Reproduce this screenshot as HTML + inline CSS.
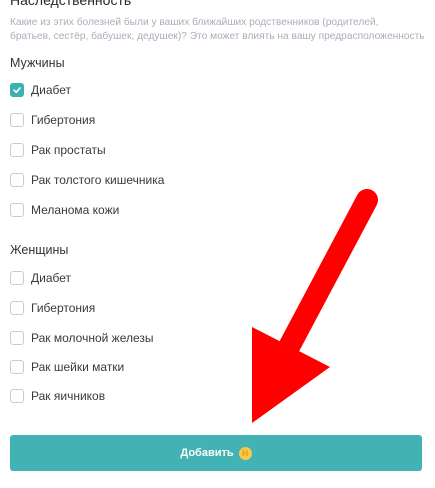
<!DOCTYPE html>
<html><head><meta charset="utf-8"><style>
body{margin:0;width:435px;height:488px;background:#fff;font-family:"Liberation Sans",sans-serif;position:relative;overflow:hidden;color:#333}
.t{position:absolute;left:10px;white-space:nowrap}
.cb{position:absolute;left:10px;width:12px;height:12px;border:1.5px solid #c9ccd8;border-radius:3px;background:#fff}
.cb.on{background:#3fb0b2;border-color:#3fb0b2}
.l{position:absolute;left:31px;font-size:12px;color:#3a3a3a;white-space:nowrap}
</style></head><body>
<div class="t" style="top:-8px;font-size:14px;color:#2a2a2a">Наследственность</div>
<div class="t" style="top:16px;font-size:10.2px;color:#a8aeba;line-height:14px">Какие из этих болезней были у ваших ближайших родственников (родителей,<br>братьев, сестёр, бабушек, дедушек)? Это может влиять на вашу предрасположенность</div>
<div class="t" style="top:56px;font-size:12.5px;color:#333">Мужчины</div>
<div class="cb on" style="top:83px"><svg width="12" height="12" style="position:absolute;left:0;top:0"><path d="M3 6.2 L5.2 8.3 L9 4" stroke="#fff" stroke-width="1.6" fill="none" stroke-linecap="round" stroke-linejoin="round"/></svg></div><div class="l" style="top:83px">Диабет</div>
<div class="cb" style="top:113px"></div><div class="l" style="top:113px">Гибертония</div>
<div class="cb" style="top:143px"></div><div class="l" style="top:143px">Рак простаты</div>
<div class="cb" style="top:173px"></div><div class="l" style="top:173px">Рак толстого кишечника</div>
<div class="cb" style="top:203px"></div><div class="l" style="top:203px">Меланома кожи</div>
<div class="t" style="top:243px;font-size:12.5px;color:#333">Женщины</div>
<div class="cb" style="top:271px"></div><div class="l" style="top:271px">Диабет</div>
<div class="cb" style="top:301px"></div><div class="l" style="top:301px">Гибертония</div>
<div class="cb" style="top:331px"></div><div class="l" style="top:331px">Рак молочной железы</div>
<div class="cb" style="top:360px"></div><div class="l" style="top:360px">Рак шейки матки</div>
<div class="cb" style="top:389px"></div><div class="l" style="top:389px">Рак яичников</div>
<div style="position:absolute;left:10px;top:435px;width:412px;height:36px;background:#42b2b5;border-radius:3px;color:#fff;font-size:11px;font-weight:bold;display:flex;align-items:center;justify-content:center;gap:5px">Добавить <span style="display:inline-block;width:13px;height:13px;border-radius:50%;background:#f7c948;color:#e89a1a;font-size:8px;line-height:13px;text-align:center;font-weight:bold">Н</span></div>
<svg width="435" height="488" style="position:absolute;left:0;top:0">
<line x1="367" y1="200" x2="290" y2="345" stroke="#ff0000" stroke-width="22" stroke-linecap="round"/>
<polygon points="252,327 330,367 252,423" fill="#ff0000"/>
</svg>
</body></html>
